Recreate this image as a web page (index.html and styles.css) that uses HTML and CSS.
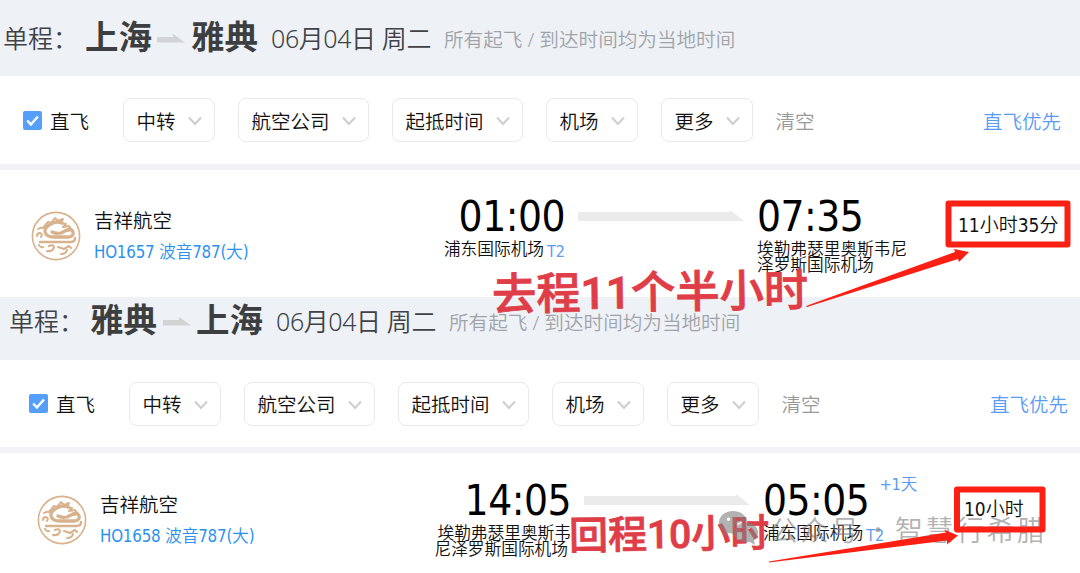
FILE: index.html
```html
<!DOCTYPE html>
<html lang="zh-CN">
<head>
    <meta charset="utf-8">
    <title>上海 - 雅典</title>
    <link rel="stylesheet" href="styles.css">
</head>
<body>
<svg class="defs" width="0" height="0">
    <symbol id="chevron" viewBox="0 0 14 10"><path d="M1 1.5l6 6.5 6-6.5" fill="none" stroke="#cfcfcf" stroke-width="2.2"/></symbol>
    <symbol id="check" viewBox="0 0 19 19"><rect width="19" height="19" rx="2" fill="#559ffb"/><path d="M4.2 9.5l3.7 4 7-8" fill="none" stroke="#fff" stroke-width="2.4"/></symbol>
    <symbol id="go" viewBox="0 0 28 9"><path d="M0 3h16V0l12 8.500H0z" fill="#d1d3d5"/></symbol>
    <symbol id="line" viewBox="0 0 166 12"><path d="M0 2h152V0l14 11H0z" fill="#ebebeb"/></symbol>
    <symbol id="dragon" viewBox="0 0 50 50">
        <g fill="none" stroke="#d8b28c" stroke-linecap="round" stroke-linejoin="round">
            <circle cx="25" cy="25" r="23.600" stroke-width="1.600"/>
            <path d="M9 31h31q4 0 4-4" stroke-width="2.400"/>
            <path d="M31 12q-5-2-9 0-9 4-8 9 1 5 9 5h15q5-1 4-5-2-4-6-2l-6 3q-5 1-9-1" stroke-width="3.300"/>
            <path d="M7 18q3-2 5-1l5-6 3 1 4-5 3 3 5-2-2 4 5 1-3 3 6-1 3 4-5 1" stroke-width="2"/>
            <path d="M6 25q0-3 3-3 3 1 1 4M8 34q1 3 4 2M18 35q4-2 5 1-1 5-7 4M27 36l6 2 5-3 2 2M30 43q5 0 6-4" stroke-width="2.100"/>
        </g>
    </symbol>
</svg>

<div class="page">
    <section class="trip">
        <div class="head">
            <span class="type">单程：</span>
            <b class="city">上海</b><svg class="go"><use href="#go"/></svg><b class="city">雅典</b>
            <span class="date">06月04日 周二</span>
            <span class="note">所有起飞 / 到达时间均为当地时间</span>
        </div>
        <div class="filters">
            <svg class="check"><use href="#check"/></svg><span class="direct">直飞</span>
            <div class="select">中转<svg><use href="#chevron"/></svg></div>
            <div class="select">航空公司<svg><use href="#chevron"/></svg></div>
            <div class="select">起抵时间<svg><use href="#chevron"/></svg></div>
            <div class="select">机场<svg><use href="#chevron"/></svg></div>
            <div class="select">更多<svg><use href="#chevron"/></svg></div>
            <span class="clear">清空</span>
            <span class="first">直飞优先</span>
        </div>
        <div class="flight">
            <svg class="logo"><use href="#dragon"/></svg>
            <div class="airline"><div class="name">吉祥航空</div><div class="number">HO1657 波音787(大)</div></div>
            <div class="depart"><div class="time">01:00</div><div class="airport">浦东国际机场<span class="terminal">T2</span></div></div>
            <svg class="line"><use href="#line"/></svg>
            <div class="arrive"><div class="time">07:35</div><div class="airport">埃勒弗瑟里奥斯韦尼<br>泽罗斯国际机场</div></div>
            <div class="duration">11小时35分</div>
        </div>
    </section>

    <section class="trip back">
        <div class="head">
            <span class="type">单程：</span>
            <b class="city">雅典</b><svg class="go"><use href="#go"/></svg><b class="city">上海</b>
            <span class="date">06月04日 周二</span>
            <span class="note">所有起飞 / 到达时间均为当地时间</span>
        </div>
        <div class="filters">
            <svg class="check"><use href="#check"/></svg><span class="direct">直飞</span>
            <div class="select">中转<svg><use href="#chevron"/></svg></div>
            <div class="select">航空公司<svg><use href="#chevron"/></svg></div>
            <div class="select">起抵时间<svg><use href="#chevron"/></svg></div>
            <div class="select">机场<svg><use href="#chevron"/></svg></div>
            <div class="select">更多<svg><use href="#chevron"/></svg></div>
            <span class="clear">清空</span>
            <span class="first">直飞优先</span>
        </div>
        <div class="flight">
            <svg class="logo"><use href="#dragon"/></svg>
            <div class="airline"><div class="name">吉祥航空</div><div class="number">HO1658 波音787(大)</div></div>
            <div class="depart"><div class="time">14:05</div><div class="airport">埃勒弗瑟里奥斯韦<br><span class="second">尼泽罗斯国际机场</span></div></div>
            <svg class="line"><use href="#line"/></svg>
            <div class="arrive"><div class="time">05:05<span class="day">+1天</span></div><div class="airport">浦东国际机场<span class="terminal">T2</span></div></div>
            <div class="duration">10小时</div>
        </div>
    </section>

    <!-- annotations -->
    <div class="mark mark-go">去程11个半小时</div>
    <div class="mark mark-back">回程10小时</div>
    <div class="watermark">
        <svg viewBox="0 0 48 40" width="48" height="40">
            <path fill-rule="evenodd" d="M14 2C6 2 0 7 0 13.500c0 4 2 7 5 9l-1 4 5-2.500 5 .800c-1-8 6-13 14-12.800C27 6 21 2 14 2zM9.500 8.500a1.700 1.700 0 1 1 0 3.400 1.700 1.700 0 0 1 0-3.400zM19 8.500a1.700 1.700 0 1 1 0 3.400 1.700 1.700 0 0 1 0-3.400z"/>
            <path fill-rule="evenodd" d="M27 13.500c-7 0-12 4.500-12 10s5 10 12 10l4-.500 5 3-1-4.500c2.500-2 4-4.500 4-8 0-5.500-5-10-12-10zM23 19a1.500 1.500 0 1 1 0 3 1.500 1.500 0 0 1 0-3zM31 19a1.500 1.500 0 1 1 0 3 1.500 1.500 0 0 1 0-3z"/>
        </svg>
        <span class="account">公众号</span><span class="dot">·</span><span class="owner">智慧行希腊</span>
    </div>
    <svg class="arrows" width="1080" height="573" viewBox="0 0 1080 573">
        <g fill="none" stroke="#fc2014" stroke-width="6" stroke-linejoin="round">
            <rect x="948.500" y="203.500" width="119" height="41"/>
            <rect x="957" y="489.500" width="85.500" height="40"/>
        </g>
        <path fill="#fc2014" d="M806 306l149-54-1-3 15 3-10 10-1-3-151 48z"/>
        <path fill="#fc2014" d="M769 561.500l177-29-2-3 14 6-11 9 0-4-178 22z"/>
    </svg>
</div>
</body>
</html>
```
FILE: styles.css
```css
* {
    box-sizing: border-box;
}

body {
    margin: 0;
    background: #fff;
    font-family: "Noto Sans", "Noto Sans CJK SC", sans-serif;
    font-weight: 350;
    color: #111;
}

.defs {
    position: absolute;
}

.page {
    position: relative;
    width: 1080px;
    height: 573px;
    overflow: hidden;
}

.page svg {
    flex: none;
}

.trip {
    height: 297px;
    white-space: nowrap;
}

.head {
    display: flex;
    align-items: center;
    height: 76px;
    padding-left: 3px;
    background: #eef1f6;
    color: #404246;
}

.back .head {
    height: 63px;
    padding: 0 0 15px 9px;
}

.head > * {
    line-height: 40px;
}

.type {
    width: 82px;
    font-size: 25px;
}

.city {
    width: 67px;
    font-size: 33.5px;
    margin-top: -5px;
    color: #3c3e40;
}

.back .city {
    margin-left: -1px;
    margin-right: 1px;
}

.go {
    width: 28px;
    height: 9px;
    margin: 0 6px 0 5px;
}

.date {
    width: 173px;
    margin-left: 13px;
    font-size: 25px;
    letter-spacing: -0.4px;
}

.back .date {
    margin-left: 12px;
}

.note {
    font-size: 19.6px;
    color: #a0a4a9;
    padding-top: 3px;
}

.filters {
    display: flex;
    align-items: center;
    height: 94px;
    padding: 0 19px 0 23px;
    border-bottom: 6px solid #f1f3f6;
    font-size: 19.5px;
}

.back .filters {
    height: 93px;
    padding: 0 12px 0 29px;
}

.check {
    width: 19px;
    height: 19px;
    margin-right: 8px;
}

.direct {
    width: 72.500px;
}

.select {
    display: flex;
    align-items: center;
    justify-content: space-between;
    height: 44px;
    margin-right: 22.500px;
    padding: 0 12px 0 13px;
    border: 1px solid #e9e9ea;
    border-radius: 8px;
}

.select svg {
    width: 14px;
    height: 10px;
    margin: 2px 0 0 12.500px;
}

.clear {
    color: #999;
}

.first {
    margin-left: auto;
    color: #5a9bf5;
}

.flight {
    display: flex;
    height: 127px;
    padding-left: 31px;
}

.back .flight {
    padding: 1px 0 0 37px;
}

.logo {
    width: 50px;
    height: 50px;
    margin: 41px 13px 0 0;
}

.airline {
    width: 301px;
    padding-top: 36px;
}

.name {
    font-size: 19.5px;
    line-height: 30px;
}

.number {
    font-family: "DejaVu Sans Condensed", "Noto Sans CJK SC", sans-serif;
    font-size: 16.800px;
    line-height: 32px;
    letter-spacing: -0.2px;
    color: #2a92ee;
}

.depart {
    width: 170px;
    padding-top: 22px;
    text-align: right;
}

.time {
    font-family: "DejaVu Sans Condensed", "DejaVu Sans", sans-serif;
    font-size: 42px;
    line-height: 49px;
    letter-spacing: -0.5px;
    color: #000;
}

.airport {
    font-size: 16.700px;
    line-height: 16px;
}

.terminal {
    position: relative;
    top: 2px;
    margin-left: 3px;
    font-family: "DejaVu Sans Condensed", sans-serif;
    font-size: 16px;
    color: #5a9bf5;
}

.second {
    padding-right: 3px;
}

.line {
    width: 166px;
    height: 12px;
    margin: 40px 13px 0;
}

.arrive {
    width: 201px;
    padding-top: 22px;
}

.day {
    position: relative;
    top: -25px;
    margin-left: 10px;
    font-family: "DejaVu Sans Condensed", "Noto Sans CJK SC", sans-serif;
    font-size: 16.500px;
    line-height: 16px;
    letter-spacing: -0.3px;
    color: #5a9bf5;
}

.duration {
    padding-top: 40px;
    font-family: "DejaVu Sans Condensed", "Noto Sans CJK SC", sans-serif;
    font-size: 19px;
    line-height: 30px;
}

.mark {
    position: absolute;
    font-family: Roboto, "Noto Sans CJK SC", sans-serif;
    font-weight: 500;
    -webkit-text-stroke: 0.8px #df3d48;
    color: #df3d48;
    white-space: nowrap;
    line-height: 50px;
    transform: rotate(-0.8deg);
}

.mark-go {
    left: 492px;
    top: 268px;
    font-size: 44.300px;
}

.mark-back {
    left: 569px;
    top: 510px;
    font-size: 39px;
}

.watermark {
    position: absolute;
    left: 719px;
    top: 509px;
    display: flex;
    font-family: "Noto Sans CJK SC", sans-serif;
    font-size: 28px;
    line-height: 40px;
    letter-spacing: 2.500px;
    color: #808080;
    fill: #808080;
    opacity: 0.6;
}

.account {
    width: 94px;
    margin-left: 3px;
}

.dot {
    width: 31px;
    font-weight: 100;
}

.arrows {
    position: absolute;
    left: 0;
    top: 0;
}
```
